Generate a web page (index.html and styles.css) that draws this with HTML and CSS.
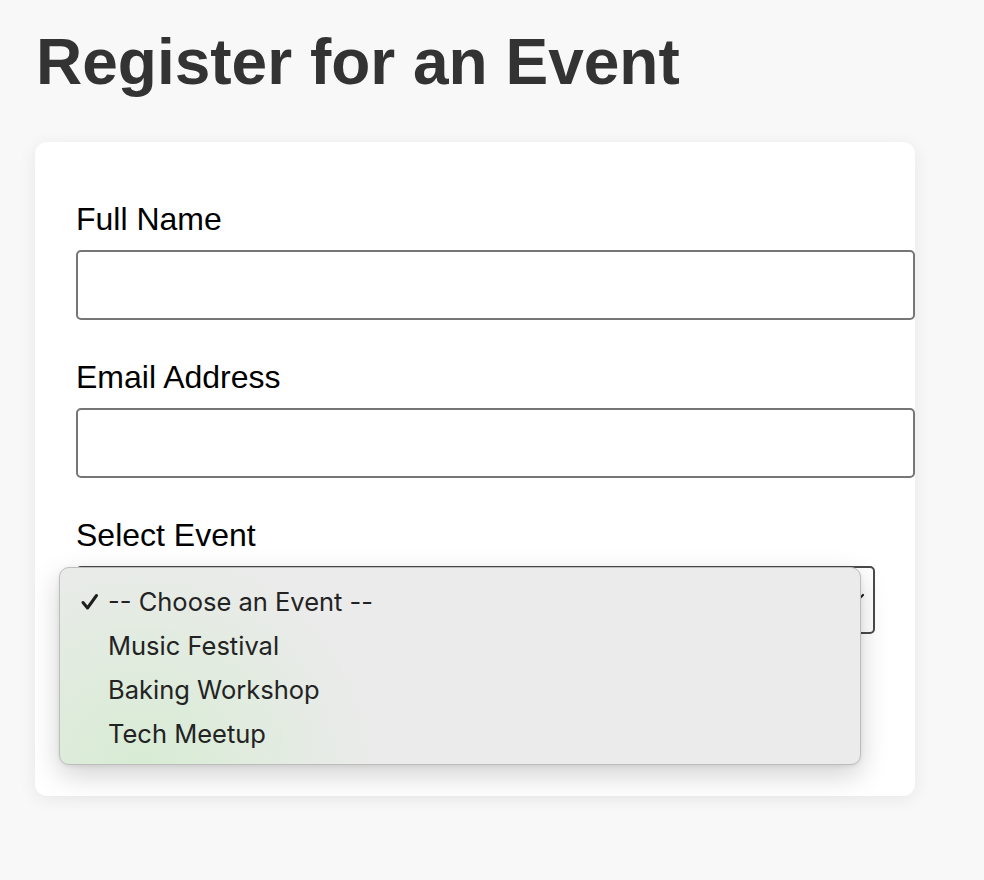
FILE: index.html
```html
<!DOCTYPE html>
<html lang="en">
<head>
<meta charset="utf-8">
<title>Register for an Event</title>
<link rel="stylesheet" href="styles.css">
</head>
<body>
<h1 class="title">Register for an Event</h1>
<form class="card">
  <div class="group">
    <label class="label" for="name">Full Name</label>
    <input class="field" id="name" type="text">
  </div>
  <div class="group">
    <label class="label" for="email">Email Address</label>
    <input class="field" id="email" type="email">
  </div>
  <div class="group">
    <label class="label" for="event">Select Event</label>
    <div class="select-wrap">
      <select class="select" id="event">
        <option>-- Choose an Event --</option>
        <option>Music Festival</option>
        <option>Baking Workshop</option>
        <option>Tech Meetup</option>
      </select>
      <svg class="chevron" width="16" height="10" viewBox="0 0 16 10"><path d="M2 2 L8 8 L14 2" fill="none" stroke="#222" stroke-width="2.2" stroke-linecap="round" stroke-linejoin="round"/></svg>
      <ul class="menu">
        <li class="opt"><svg class="check" width="20" height="20" viewBox="0 0 20 20"><path d="M3 10.5 L7.5 16 L16.5 3.5" fill="none" stroke="#1e1e1e" stroke-width="3" stroke-linecap="round" stroke-linejoin="round"/></svg>-- Choose an Event --</li>
        <li class="opt">Music Festival</li>
        <li class="opt">Baking Workshop</li>
        <li class="opt">Tech Meetup</li>
      </ul>
    </div>
  </div>
</form>
</body>
</html>
```
FILE: styles.css
```css
html, body {
  margin: 0;
  padding: 0;
}
body {
  background: #f8f8f8;
  font-family: "Liberation Sans", Arial, sans-serif;
  padding: 26px 69px 40px 35px;
}
.title {
  margin: 0 0 44px 1px;
  font-size: 64px;
  font-weight: 700;
  color: #333;
  line-height: 72px;
}
.card {
  display: block;
  width: 800px;
  background: #fff;
  border-radius: 12px;
  padding: 59px 40px 162px 40px;
  box-shadow: 0 3px 18px rgba(0, 0, 0, 0.07);
}
.group {
  margin-bottom: 39px;
}
.group:last-of-type {
  margin-bottom: 0;
}
.label {
  display: block;
  font-size: 32px;
  line-height: 36px;
  color: #000;
  margin: 0 0 13px 1px;
}
.field {
  display: block;
  box-sizing: border-box;
  width: 839px;
  height: 70px;
  margin: 0 0 0 1px;
  border: 2px solid #767676;
  border-radius: 5px;
  background: #fff;
  font-size: 28px;
  padding: 0 18px;
}
.select-wrap {
  position: relative;
  width: 800px;
}
.select {
  display: block;
  box-sizing: border-box;
  width: 799px;
  height: 68px;
  margin-left: 1px;
  appearance: none;
  -webkit-appearance: none;
  background: #fff;
  border: 2px solid #4a4a4a;
  border-radius: 5px;
  font-size: 28px;
  font-family: "Liberation Sans", Arial, sans-serif;
  padding: 0 18px;
  color: #000;
}
.chevron {
  position: absolute;
  right: 10px;
  top: 27px;
}
.menu {
  position: absolute;
  left: -16px;
  top: 1px;
  width: 800px;
  margin: 0;
  padding: 12px 0 8px 0;
  list-style: none;
  border: 1px solid #bdbdbd;
  border-radius: 10px;
  background:
    radial-gradient(ellipse 240px 230px at 80px 200px, rgba(214, 236, 210, 0.95), rgba(214, 236, 210, 0) 100%),
    #ebebeb;
  box-shadow: 0 10px 28px rgba(0, 0, 0, 0.18), 0 1px 4px rgba(0, 0, 0, 0.08);
  font-family: Inter, "Noto Sans", sans-serif;
  z-index: 5;
}
.opt {
  position: relative;
  height: 44px;
  line-height: 44px;
  padding-left: 48px;
  font-size: 25.5px;
  color: #232323;
}
.check {
  position: absolute;
  left: 20px;
  top: 12px;
}
```
